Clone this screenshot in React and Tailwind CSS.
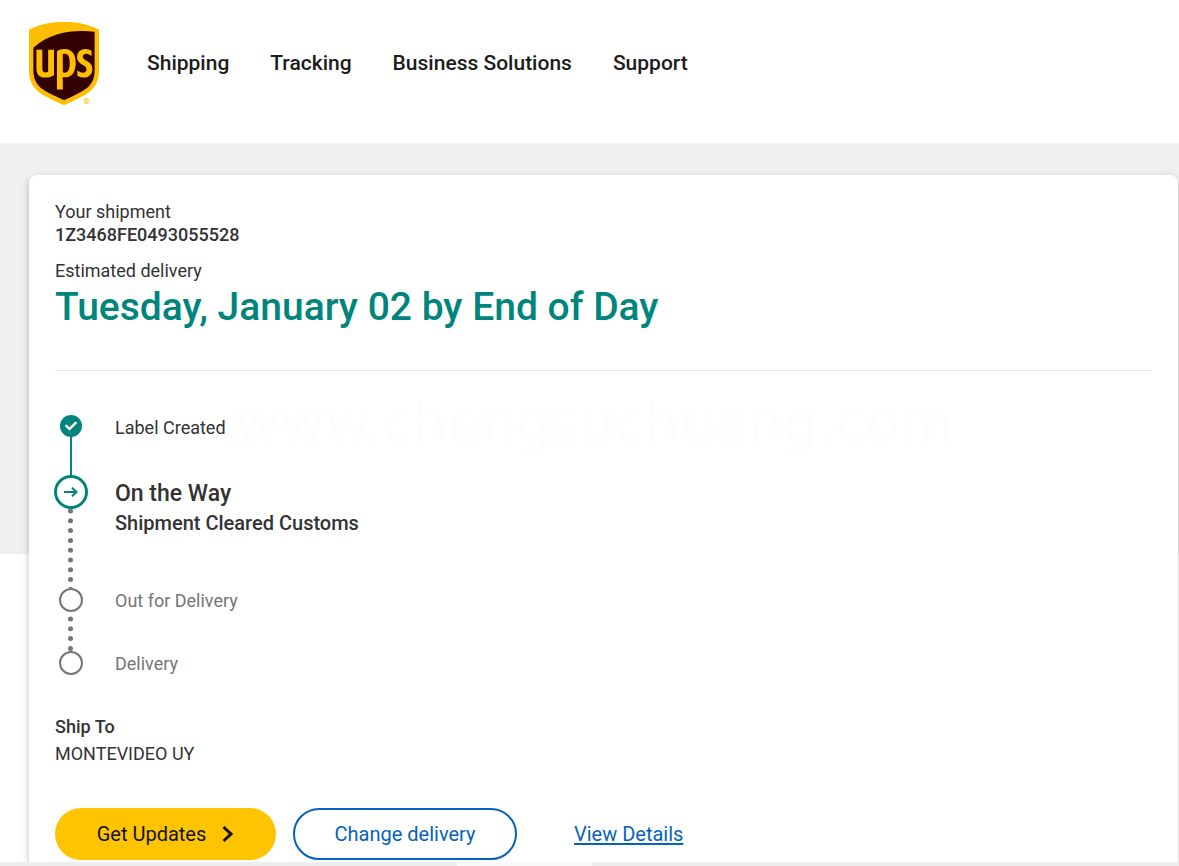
import { FaCheck } from "react-icons/fa";
import { SiUps } from "react-icons/si";

const links = ["Shipping", "Tracking", "Business Solutions", "Support"];

function Logo() {
	return (
		<a href="#" aria-label="UPS" className="block">
			<svg viewBox="31 0 338 400" className="h-[83px] w-[70px]">
				<clipPath id="shield">
					<path d="M45 40H355V235C355 280 330 315 295 335L200 385L105 335C70 315 45 280 45 235Z" />
				</clipPath>
				<SiUps size={400} color="#ffbe00" />
				<path
					d="M31 38C130 -13 270 -13 369 38V235C369 285 345 325 308 347C285 360 250 378 200 400C150 378 115 360 92 347C55 325 31 285 31 235Z"
					fill="#ffbe00"
				/>
				<g clipPath="url(#shield)">
					<SiUps size={400} color="#330000" />
				</g>
			</svg>
		</a>
	);
}

function Header() {
	return (
		<header className="flex h-[143px] items-start gap-12 px-[29px] pt-[22px]">
			<Logo />
			<nav className="flex gap-[41px] pt-[27px]">
				{links.map((link) => (
					<a key={link} href="#" className="text-[21px] leading-7 font-medium text-[#1c1c1c]">
						{link}
					</a>
				))}
			</nav>
		</header>
	);
}

function Dots({ start }) {
	return (
		<svg className="h-0 w-[6px] grow">
			<line
				x1="2.5"
				y1={start}
				x2="2.5"
				y2="200"
				stroke="#757575"
				strokeWidth="5"
				strokeLinecap="round"
				strokeDasharray="0 9.8"
			/>
		</svg>
	);
}

function Timeline() {
	return (
		<ol className="pt-11">
			<li className="flex h-[60px] gap-7">
				<div className="flex w-8 flex-col items-center">
					<span className="flex size-[22px] items-center justify-center rounded-full bg-[#00857d] text-white">
						<FaCheck className="size-3" />
					</span>
					<span className="w-0.5 grow bg-[#00857d]" />
				</div>
				<p className="text-lg leading-[26px]">Label Created</p>
			</li>
			<li className="flex h-[113px] gap-7">
				<div className="flex w-8 flex-col items-center">
					<span className="flex size-[34px] shrink-0 items-center justify-center rounded-full border-[3px] border-[#00857d] text-[#00857d]">
						<svg viewBox="0 0 14 10" className="h-[10px] w-[14px]" fill="none" stroke="currentColor" strokeWidth="2">
							<path d="M0 5H12.500M8 0.700L12.500 5L8 9.300" />
						</svg>
					</span>
					<Dots start="2" />
				</div>
				<div className="pt-1">
					<p className="text-[23px] leading-[30px] font-medium">On the Way</p>
					<p className="text-xl leading-7 font-medium">Shipment Cleared Customs</p>
				</div>
			</li>
			<li className="flex h-[63px] gap-7">
				<div className="flex w-8 flex-col items-center">
					<span className="size-6 shrink-0 rounded-full border-2 border-[#757575]" />
					<Dots start="7" />
				</div>
				<p className="text-lg leading-[26px] text-[#757575]">Out for Delivery</p>
			</li>
			<li className="flex gap-7">
				<div className="flex w-8 flex-col items-center">
					<span className="size-6 rounded-full border-2 border-[#757575]" />
				</div>
				<p className="text-lg leading-[26px] text-[#757575]">Delivery</p>
			</li>
		</ol>
	);
}

export default function App() {
	return (
		<div className="min-h-screen bg-white font-['Roboto',sans-serif] text-[#333333]">
			<Header />
			<main className="bg-[linear-gradient(#efefed_411px,transparent_411px)] pt-8 pr-px pl-[29px]">
				<section className="relative rounded-t-lg bg-white px-[26px] pt-[25px] pb-1.5 shadow-[0_3px_7px_rgba(0,0,0,0.25)]">
					<p className="text-lg leading-6">Your shipment</p>
					<p className="text-lg leading-[22px] font-medium">1Z3468FE0493055528</p>
					<p className="pt-[13px] text-lg leading-6">Estimated delivery</p>
					<h1 className="text-[39px] leading-12 font-medium text-[#00857d]">
						Tuesday, January 02 by End of Day
					</h1>
					<hr className="mt-[39px] border-[#e5e5e5]" />
					<Timeline />
					<p className="pt-[38px] text-lg leading-6 font-medium">Ship To</p>
					<p className="pt-[3px] text-lg leading-6">MONTEVIDEO UY</p>
					<div className="flex items-center gap-[17px] pt-[42px] text-xl">
						<button
							type="button"
							className="flex h-[52px] w-[221px] items-center justify-center gap-4 rounded-full bg-[#ffc400] text-[#121212]"
						>
							Get Updates
							<svg viewBox="0 0 12 18" className="h-[18px] w-3" fill="none" stroke="currentColor" strokeWidth="3">
								<path d="M1.500 2L9 9L1.500 16" />
							</svg>
						</button>
						<button
							type="button"
							className="h-[52px] w-56 rounded-full border-2 border-[#0662bb] text-[#0662bb]"
						>
							Change delivery
						</button>
						<a href="#" className="ml-10 text-[#0662bb] underline decoration-2 underline-offset-2">
							View Details
						</a>
					</div>
					<p className="pointer-events-none absolute top-[218px] left-[206px] font-['DejaVu_Sans',sans-serif] text-[55px] leading-[60px] text-[#fdfdfd]">
						www.chengsuchuang.com
					</p>
				</section>
			</main>
			<div className="fixed inset-x-0 bottom-0 flex h-1 bg-[#eeeeee]">
				<div className="ml-[457px] w-[135px] bg-[#f9f9f9]" />
			</div>
		</div>
	);
}
